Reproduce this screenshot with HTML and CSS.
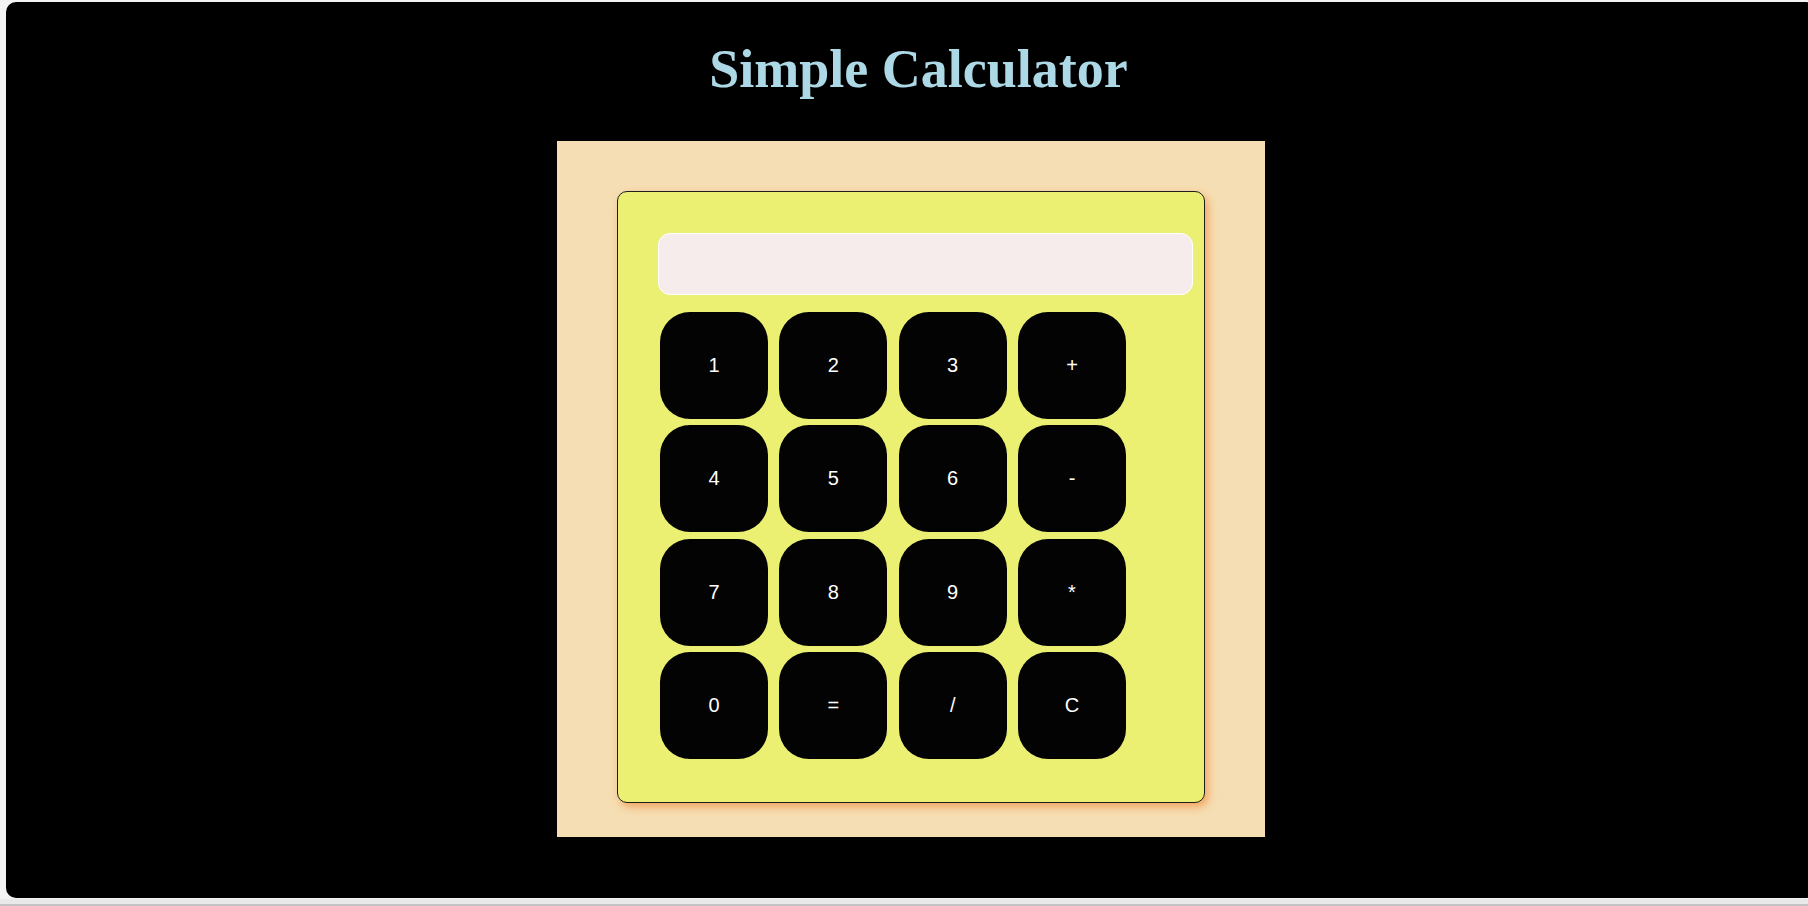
FILE: index.html
```html
<!DOCTYPE html>
<html lang="en">
<head>
<meta charset="utf-8">
<title>Simple Calculator</title>
<link rel="stylesheet" href="styles.css">
</head>
<body>
<div class="page">
  <h1 class="title">Simple Calculator</h1>
  <div class="frame">
    <div class="calculator">
      <input class="display" type="text" readonly>
      <div class="keys">
        <button class="key">1</button>
        <button class="key">2</button>
        <button class="key">3</button>
        <button class="key">+</button>
        <button class="key">4</button>
        <button class="key">5</button>
        <button class="key">6</button>
        <button class="key">-</button>
        <button class="key">7</button>
        <button class="key">8</button>
        <button class="key">9</button>
        <button class="key">*</button>
        <button class="key">0</button>
        <button class="key">=</button>
        <button class="key">/</button>
        <button class="key">C</button>
      </div>
    </div>
  </div>
</div>
</body>
</html>
```

FILE: styles.css
```css
html, body {
  margin: 0;
  padding: 0;
  overflow: hidden;
}

body {
  height: 906px;
  background: linear-gradient(to bottom, #f4f4f4 0, #f4f4f4 899px, #e9e9e9 899px, #e9e9e9 904px, #c4c4c4 904px);
}

.page {
  margin: 2px 0 0 6px;
  width: 1810px;
  height: 896px;
  background: #000;
  border-radius: 10px;
  padding-top: 36px;
  box-sizing: border-box;
}

.title {
  margin: 0;
  padding-left: 15px;
  font-family: "Liberation Serif", "Times New Roman", serif;
  font-weight: bold;
  font-size: 54px;
  line-height: 62px;
  color: #add8e6;
  text-align: center;
}

.frame {
  width: 708px;
  height: 696px;
  margin: 41px auto 0;
  padding: 50px 60px 34px;
  box-sizing: border-box;
  background: #f5deb3;
}

.calculator {
  width: 588px;
  height: 612px;
  box-sizing: border-box;
  background: #ebf073;
  border: 1px solid #1e1e1e;
  border-radius: 10px;
  padding: 41px 0 0 40px;
  box-shadow: 3px 4px 8px #f4a460;
}

.display {
  display: block;
  width: 535px;
  height: 62px;
  box-sizing: border-box;
  margin: 0;
  padding: 0 12px;
  background: #f5eceb;
  border: 1px solid #ffffff;
  border-radius: 12px;
  outline: none;
  font-family: "Liberation Sans", Arial, sans-serif;
  font-size: 20px;
}

.keys {
  display: grid;
  grid-template-columns: repeat(4, 108px);
  grid-auto-rows: 107px;
  column-gap: 11.33px;
  row-gap: 6.33px;
  margin: 17px 0 0 2px;
}

.key {
  margin: 0;
  padding: 0;
  border: none;
  border-radius: 30px;
  background: #030303;
  color: #ffffff;
  font-family: "Liberation Sans", Arial, sans-serif;
  font-size: 20px;
  cursor: pointer;
}
```
